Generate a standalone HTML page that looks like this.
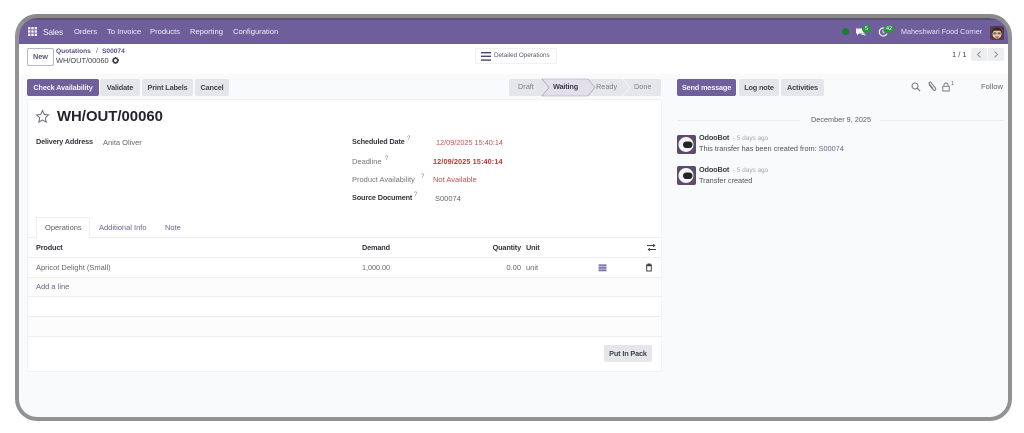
<!DOCTYPE html>
<html><head><meta charset="utf-8">
<style>
html,body{margin:0;padding:0;width:1024px;height:433px;overflow:hidden;background:#fff;}
body{font-family:"Liberation Sans",sans-serif;position:relative;}
#f{position:absolute;left:15px;top:14px;width:989px;height:399px;border:4px solid #929292;border-radius:22px;overflow:hidden;background:#f9fafb;box-sizing:content-box;border-top-color:#8a8a8a;}
#w{position:absolute;left:-19px;top:-18px;width:1024px;height:433px;filter:blur(.35px);}
.a{position:absolute;}
.t{position:absolute;line-height:12px;font-size:7.5px;white-space:nowrap;color:#4b5058;}
.b{font-weight:bold;font-size:7.3px;letter-spacing:-.15px;}
.n{color:#f2eff8;font-size:7.6px;}
.btn{position:absolute;height:17px;line-height:17px;text-align:center;font-size:7.3px;letter-spacing:-.15px;font-weight:bold;background:#e4e6e9;color:#3f444c;border-radius:2px;white-space:nowrap;}
.p{background:#6f5f9b;color:#f6f3fb;}
.l{position:absolute;left:28px;width:633px;height:1px;background:#eceef0;}
.row{position:absolute;left:28px;width:633px;}
</style></head><body>
<div id="f"><div id="w">
<!-- navbar -->
<div class="a" style="left:0;top:18px;width:1024px;height:26px;background:#6e5f9c;"></div>
<div class="a" style="left:0;top:18px;width:1024px;height:2px;background:#5d5178;"></div>
<svg class="a" style="left:28px;top:27px" width="9" height="9"><g fill="#f3f0f8"><rect x="0" y="0" width="2.4" height="2.4"/><rect x="3.3" y="0" width="2.4" height="2.4"/><rect x="6.6" y="0" width="2.4" height="2.4"/><rect x="0" y="3.3" width="2.4" height="2.4"/><rect x="3.3" y="3.3" width="2.4" height="2.4"/><rect x="6.6" y="3.3" width="2.4" height="2.4"/><rect x="0" y="6.6" width="2.4" height="2.4"/><rect x="3.3" y="6.6" width="2.4" height="2.4"/><rect x="6.6" y="6.6" width="2.4" height="2.4"/></g></svg>
<div class="t n" style="left:43px;top:26px;font-size:8.4px;letter-spacing:-.2px;">Sales</div>
<div class="t n" style="left:74px;top:26px;">Orders</div>
<div class="t n" style="left:107px;top:26px;">To Invoice</div>
<div class="t n" style="left:150px;top:26px;">Products</div>
<div class="t n" style="left:190px;top:26px;">Reporting</div>
<div class="t n" style="left:233px;top:26px;">Configuration</div>
<div class="a" style="left:842px;top:28px;width:7px;height:7px;border-radius:50%;background:#1c7a34;"></div>
<svg class="a" style="left:855px;top:27px" width="11" height="10"><path d="M1 1.500h7.500v5H4L2 8.500V6.500H1z" fill="#f3f0f8"/><path d="M9.500 3.500v4h1v1.500L8.500 8H6" fill="#d8d2e6"/></svg>
<div class="a" style="left:862px;top:25px;width:9px;height:8px;border-radius:4px;background:#2a9440;color:#fff;font-size:5.5px;line-height:8px;text-align:center;">5</div>
<svg class="a" style="left:878px;top:27px" width="10" height="10"><path d="M8.200 2.200A4 4 0 1 0 9 6.500" fill="none" stroke="#f3f0f8" stroke-width="1.200"/><path d="M5 3v2.300l1.400 1" fill="none" stroke="#f3f0f8" stroke-width=".9"/></svg>
<div class="a" style="left:884px;top:25px;width:10px;height:8px;border-radius:4px;background:#2a9440;color:#fff;font-size:5.5px;line-height:8px;text-align:center;">42</div>
<div class="t n" style="left:901px;top:26px;font-size:7.2px;color:#e8e3f1;">Maheshwari Food Corner</div>
<svg class="a" style="left:990px;top:26px" width="14" height="14"><rect width="14" height="14" rx="2" fill="#5a3a4a"/><ellipse cx="7" cy="8" rx="4.500" ry="4.600" fill="#eec9a6"/><path d="M2.200 7C2 3 5 1.600 7 1.600S12 3 11.800 7L10.500 4.800 4 4.600z" fill="#33241f"/><rect x="3.400" y="6.400" width="3" height="2" fill="#3a3a3a" opacity=".75"/><rect x="7.600" y="6.400" width="3" height="2" fill="#3a3a3a" opacity=".75"/><path d="M5 10.400h4l-.6 1.400H5.600z" fill="#a9574d"/></svg>

<!-- control panel -->
<div class="a" style="left:0;top:44px;width:1024px;height:30px;background:#fff;"></div>
<div class="a" style="left:27px;top:48px;width:25px;height:16px;border:1px solid #b9b3cb;border-radius:2px;background:#fff;color:#5d5478;font-size:7.3px;font-weight:bold;line-height:16px;text-align:center;">New</div>
<div class="t" style="left:56px;top:46px;font-size:6.6px;color:#5b4f86;font-weight:bold;">Quotations</div>
<div class="t" style="left:96px;top:46px;font-size:7px;color:#666;">/</div>
<div class="t" style="left:102px;top:46px;font-size:6.6px;color:#5b4f86;font-weight:bold;">S00074</div>
<div class="t" style="left:56px;top:54.500px;font-size:7.400px;color:#3f444c;">WH/OUT/00060</div>
<svg class="a" style="left:112px;top:57px" width="7" height="7"><circle cx="3.500" cy="3.500" r="2.200" fill="none" stroke="#33373d" stroke-width="1.500"/><circle cx="3.500" cy="3.500" r="3.200" fill="none" stroke="#33373d" stroke-width=".7" stroke-dasharray="1 1"/></svg>
<div class="a" style="left:475px;top:48px;width:82px;height:16px;background:#fff;border:1px solid #f0f0f2;box-sizing:border-box;border-radius:2px;"></div>
<svg class="a" style="left:481px;top:52px" width="10" height="9"><g fill="#4c4470"><rect width="10" height="1.400"/><rect y="3.600" width="10" height="1.400"/><rect y="7.400" width="10" height="1.400"/></g></svg>
<div class="t" style="left:494px;top:50px;font-size:6.300px;color:#555a62;">Detailed Operations</div>
<div class="t" style="left:952px;top:48.500px;font-size:7.500px;color:#444;">1 / 1</div>
<div class="a" style="left:971px;top:48px;width:33px;height:13px;background:#eceef0;border-radius:2px;"></div>
<svg class="a" style="left:971px;top:48px" width="33" height="13"><path d="M9.500 3.500L6.500 6.500l3 3M23.500 3.500l3 3-3 3" fill="none" stroke="#8a8e94" stroke-width=".9"/><path d="M16.500 0v13" stroke="#f7f7f8"/></svg>

<!-- action row -->
<div class="btn p" style="left:27px;top:79px;width:72px;">Check Availability</div>
<div class="btn" style="left:100px;top:79px;width:40px;">Validate</div>
<div class="btn" style="left:142px;top:79px;width:51px;">Print Labels</div>
<div class="btn" style="left:195px;top:79px;width:34px;">Cancel</div>

<!-- statusbar -->
<div class="a" style="left:509px;top:79px;width:152px;height:17px;background:#e4e6e9;border-radius:2px;"></div>
<svg class="a" style="left:540px;top:78px" width="110" height="19"><path d="M2 1h46l7 8.500-7 8.500H2l7-8.500z" fill="#e2dfea" stroke="#a39db8" stroke-width=".6"/><path d="M83 1l7 8.500-7 8.500" fill="none" stroke="#f4f4f6" stroke-width=".9"/></svg>
<div class="t" style="left:518px;top:81px;color:#7a7f86;font-size:7.300px;">Draft</div>
<div class="t b" style="left:553px;top:81px;color:#3d3a4e;">Waiting</div>
<div class="t" style="left:596px;top:81px;color:#7a7f86;font-size:7.300px;">Ready</div>
<div class="t" style="left:634px;top:81px;color:#7a7f86;font-size:7.300px;">Done</div>

<!-- sheet -->
<div class="a" style="left:28px;top:100px;width:633px;height:271px;background:#fff;border-radius:2px;box-shadow:0 0 0 1px #f1f2f4;"></div>
<svg class="a" style="left:35px;top:109px" width="15" height="15"><path d="M7.500 1.500l1.800 4 4.200.4-3.200 2.900.9 4.300-3.700-2.200-3.700 2.200.9-4.300L1.500 5.900l4.200-.4z" fill="none" stroke="#6a6e74" stroke-width="1"/></svg>
<div class="t" style="left:57px;top:109px;line-height:17px;font-size:14.900px;font-weight:bold;color:#22262b;">WH/OUT/00060</div>
<div class="t b" style="left:36px;top:136px;color:#33373d;">Delivery Address</div>
<div class="t" style="left:103px;top:137px;color:#62666d;">Anita Oliver</div>

<div class="t b" style="left:352px;top:136px;color:#33373d;">Scheduled Date</div>
<div class="t" style="left:407px;top:133px;font-size:6px;color:#5f8fa3;">?</div>
<div class="t" style="left:436px;top:137px;color:#c05454;font-size:7.300px;">12/09/2025 15:40:14</div>
<div class="t" style="left:352px;top:156px;color:#71767d;">Deadline</div>
<div class="t" style="left:385px;top:153px;font-size:6px;color:#5f8fa3;">?</div>
<div class="t b" style="left:433px;top:156px;color:#b93a3a;letter-spacing:.1px;">12/09/2025 15:40:14</div>
<div class="t" style="left:352px;top:174px;color:#71767d;">Product Availability</div>
<div class="t" style="left:421px;top:171px;font-size:6px;color:#5f8fa3;">?</div>
<div class="t" style="left:433px;top:174px;color:#c05454;">Not Available</div>
<div class="t b" style="left:352px;top:192px;color:#33373d;">Source Document</div>
<div class="t" style="left:414px;top:189px;font-size:6px;color:#5f8fa3;">?</div>
<div class="t" style="left:435px;top:193px;color:#62666d;">S00074</div>

<!-- tabs -->
<div class="l" style="top:237px;"></div>
<div class="a" style="left:36px;top:217px;width:54px;height:21px;background:#fff;border:1px solid #eceef0;border-bottom:none;box-sizing:border-box;"></div>
<div class="t" style="left:45px;top:222px;color:#5a5f66;">Operations</div>
<div class="t" style="left:99px;top:222px;color:#6d6390;">Additional Info</div>
<div class="t" style="left:165px;top:222px;color:#6d6390;">Note</div>

<!-- table -->
<div class="t b" style="left:36px;top:242px;color:#33373d;">Product</div>
<div class="t b" style="left:362px;top:242px;color:#33373d;">Demand</div>
<div class="t b" style="right:503px;top:242px;color:#33373d;">Quantity</div>
<div class="t b" style="left:526px;top:242px;color:#33373d;">Unit</div>
<svg class="a" style="left:647px;top:243px" width="9" height="9"><path d="M0 2.500h7M2 6.500h7" stroke="#3c4046" stroke-width="1"/><path d="M6 .8l2.500 1.700L6 4.200zM3 4.800L.5 6.500 3 8.200z" fill="#3c4046"/></svg>
<div class="l" style="top:257px;"></div>
<div class="t" style="left:36px;top:262px;color:#62666d;">Apricot Delight (Small)</div>
<div class="t" style="left:362px;top:262px;color:#62666d;font-size:7.200px;">1,000.00</div>
<div class="t" style="right:503px;top:262px;color:#62666d;">0.00</div>
<div class="t" style="left:526px;top:262px;color:#62666d;">unit</div>
<svg class="a" style="left:598px;top:264px" width="9" height="8"><g fill="#8277aa"><rect width="8" height="2" x=".5" y=".3"/><rect width="8" height="2" x=".5" y="2.800"/><rect width="8" height="2" x=".5" y="5.300"/></g></svg>
<svg class="a" style="left:645px;top:263px" width="8" height="9"><path d="M1 2h6M3 2V1h2v1M1.700 2.800h4.600V8H1.700z" fill="none" stroke="#3c4046" stroke-width="1"/></svg>
<div class="l" style="top:277px;height:1px;"></div>
<div class="row" style="top:278px;height:19px;background:#fcfcfd;"></div>
<div class="t" style="left:36px;top:281px;color:#6d6390;">Add a line</div>
<div class="l" style="top:296px;"></div>
<div class="l" style="top:316px;"></div>
<div class="row" style="top:317px;height:19px;background:#fcfcfd;"></div>
<div class="l" style="top:336px;"></div>
<div class="btn" style="left:604px;top:345px;width:48px;">Put In Pack</div>

<!-- chatter -->
<div class="btn p" style="left:677px;top:79px;width:59px;">Send message</div>
<div class="btn" style="left:739px;top:79px;width:40px;">Log note</div>
<div class="btn" style="left:781px;top:79px;width:43px;">Activities</div>
<svg class="a" style="left:911px;top:82px" width="10" height="10"><circle cx="4" cy="4" r="3" fill="none" stroke="#71767d" stroke-width="1"/><path d="M6.200 6.200L9 9" stroke="#71767d" stroke-width="1.200"/></svg>
<svg class="a" style="left:927px;top:81px" width="10" height="11"><path d="M2 3.500l4.500 5.500c1 1.200 3-.2 2-1.800L4 1.500C3.200.5 1.500 1.500 2.200 2.800L6 7.500" fill="none" stroke="#71767d" stroke-width="1"/></svg>
<svg class="a" style="left:941px;top:82px" width="10" height="10"><path d="M3 4V3a2 2 0 0 1 4 0v1M1.800 4.300h6.400V9H1.800z" fill="none" stroke="#71767d" stroke-width=".9"/></svg>
<div class="t" style="left:951px;top:78px;font-size:5.500px;color:#62666d;">1</div>
<div class="t" style="left:981px;top:81px;color:#62666d;font-size:7.600px;">Follow</div>

<div class="a" style="left:678px;top:120px;width:122px;height:1px;background:#e9ebee;"></div>
<div class="a" style="left:880px;top:120px;width:124px;height:1px;background:#e9ebee;"></div>
<div class="t" style="left:811px;top:114px;color:#5a5f66;font-size:7.300px;">December 9, 2025</div>

<svg class="a" style="left:677px;top:135px" width="19" height="19"><rect width="19" height="19" rx="2" fill="#5e4a6e"/><circle cx="9" cy="9.500" r="7.500" fill="#f4f4f6"/><rect x="6" y="6.500" width="9.500" height="6.500" rx="3.200" fill="#23242a"/></svg>
<div class="t b" style="left:699px;top:132px;color:#3b3f45;">OdooBot</div>
<div class="t" style="left:733px;top:132.500px;font-size:6.400px;color:#a3a7ad;">- 5 days ago</div>
<div class="t" style="left:699px;top:143px;color:#50545b;font-size:7.300px;">This transfer has been created from: <span style="color:#6d6390;">S00074</span></div>

<svg class="a" style="left:677px;top:166px" width="19" height="19"><rect width="19" height="19" rx="2" fill="#5e4a6e"/><circle cx="9" cy="9.500" r="7.500" fill="#f4f4f6"/><rect x="6" y="6.500" width="9.500" height="6.500" rx="3.200" fill="#23242a"/></svg>
<div class="t b" style="left:699px;top:164px;color:#3b3f45;">OdooBot</div>
<div class="t" style="left:733px;top:164.500px;font-size:6.400px;color:#a3a7ad;">- 5 days ago</div>
<div class="t" style="left:699px;top:175px;color:#50545b;font-size:7.300px;">Transfer created</div>
</div></div>
</body></html>
